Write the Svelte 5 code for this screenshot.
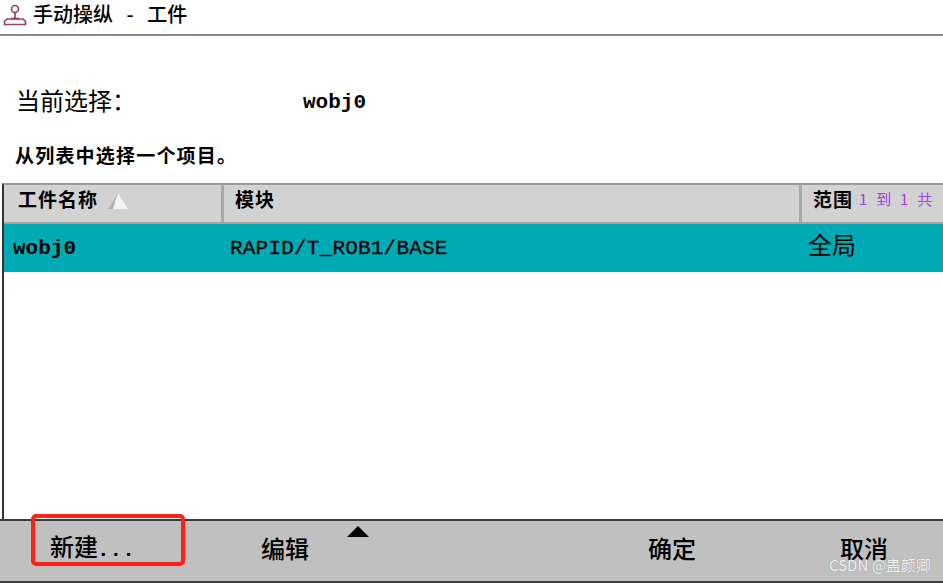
<script>
  const footerItems = [
    { label: '新建', dots: true, cls: 'new' },
    { label: '编辑', cls: 'edit' },
    { label: '确定', cls: 'ok' },
    { label: '取消', cls: 'cancel' }
  ];
</script>

<div class="screen">
  <header class="title-bar">
    <svg class="title-icon" width="24" height="22" viewBox="0 0 24 22" fill="none" stroke="#96406a" stroke-width="1.7">
      <circle cx="12" cy="5" r="3.5" />
      <path d="M12 8.5v6" />
      <path d="M8 14.500h8" />
      <path d="M4 15h16l2.500 2.500v3h-21v-3z" />
    </svg>
    <span class="title">手动操纵 - 工件</span>
  </header>

  <div class="current">
    <span class="current-label">当前选择：</span>
    <span class="current-value">wobj0</span>
  </div>

  <p class="hint">从列表中选择一个项目。</p>

  <section class="table">
    <div class="thead">
      <div class="th col-name">
        工件名称
        <svg class="sort" width="22" height="18" viewBox="0 0 22 18">
          <path d="M11 1L1 17h20z" fill="#f4f4f4" />
          <path d="M11 1L1 17h5z" fill="#b0b0b0" />
        </svg>
      </div>
      <div class="th col-module">模块</div>
      <div class="th col-scope">
        范围
        <span class="count">1 到 1 共</span>
      </div>
    </div>
    <div class="row selected">
      <div class="col-name cell mono bold">wobj0</div>
      <div class="col-module cell mono">RAPID/T_ROB1/BASE</div>
      <div class="col-scope cell scope">全局</div>
    </div>
  </section>

  <footer class="footer">
    {#each footerItems as item}
      <button class="foot-btn {item.cls}">{item.label}{#if item.dots}<span class="dots">...</span>{/if}</button>
    {/each}
    <span class="caret"></span>
    <span class="highlight"></span>
    <span class="watermark">CSDN @蛊颜卿</span>
  </footer>
</div>

<style>
  :global(body) { margin: 0; background: #fff; }

  .screen {
    width: 943px;
    height: 583px;
    display: flex;
    flex-direction: column;
    overflow: hidden;
    font-family: "Noto Sans CJK SC", "Liberation Sans", sans-serif;
    color: #000;
    background: #fff;
  }

  .title-bar {
    height: 36px;
    flex: none;
    display: flex;
    align-items: center;
    padding: 0 0 7px 3px;
    box-sizing: border-box;
    border-bottom: 2px solid #8a8a8a;
    gap: 6px;
  }
  .title-icon { flex: none; margin-top: 2px; }
  .title {
    font-size: 20px;
    font-weight: 500;
    word-spacing: 9px;
    line-height: 27px;
  }

  .current {
    display: flex;
    align-items: center;
    margin-top: 48px;
    padding-left: 16px;
    height: 32px;
    flex: none;
  }
  .current-label {
    width: 287px;
    flex: none;
    font-size: 24px;
    line-height: 32px;
  }
  .current-value, .mono {
    font-family: "Liberation Mono", "DejaVu Sans Mono", monospace;
  }
  .current-value { font-size: 21px; font-weight: 700; margin-top: 4px; }

  .hint {
    margin: 27px 0 0;
    padding-left: 15px;
    font-size: 19px;
    font-weight: 700;
    letter-spacing: 1.2px;
    line-height: 24px;
    flex: none;
  }

  .table {
    margin-top: 16px;
    flex: 1;
    border-top: 2px solid #9c9c9c;
    border-left: 2px solid #333;
    margin-left: 2px;
    display: flex;
    flex-direction: column;
    min-height: 0;
  }

  .thead {
    display: flex;
    height: 37px;
    flex: none;
    background: #d2d2d2;
    border-bottom: 2px solid #a4a4a4;
  }
  .th {
    display: flex;
    align-items: flex-start;
    height: 100%;
    box-sizing: border-box;
    padding-top: 1px;
    font-size: 19px;
    font-weight: 700;
    letter-spacing: 1px;
    line-height: 26px;
    border-right: 3px solid #a8a8a8;
  }
  .th:last-child { border-right: 0; }
  .col-name { width: 220px; flex: none; box-sizing: border-box; padding-left: 14px; }
  .col-module { width: 578px; flex: none; box-sizing: border-box; padding-left: 11px; }
  .col-scope { flex: 1; box-sizing: border-box; padding-left: 11px; }

  .sort { margin: 6px 0 0 9px; }
  .count {
    margin-left: 6px;
    font-size: 15px;
    font-weight: 400;
    letter-spacing: 0;
    color: #a040e0;
    word-spacing: 5.5px;
  }

  .row.selected {
    display: flex;
    align-items: center;
    height: 48px;
    flex: none;
    background: #00aab4;
  }
  .cell { white-space: nowrap; }
  .row .col-name { padding-left: 9px; font-size: 21px; }
  .row .col-module { padding-left: 6px; font-size: 21px; letter-spacing: 0.2px; -webkit-text-stroke: 0.3px #000; }
  .bold { font-weight: 700; }
  .scope { font-size: 24px; padding-left: 6px; margin-top: -10px; }

  .footer {
    position: relative;
    height: 64px;
    flex: none;
    display: flex;
    align-items: center;
    background: #c0c0c0;
    border-top: 2px solid #3c3c3c;
    border-bottom: 2px solid #3c3c3c;
    box-sizing: border-box;
  }
  .foot-btn {
    padding: 0;
    border: 0;
    background: none;
    font: inherit;
    font-size: 24px;
    font-weight: 500;
    line-height: 32px;
    color: #000;
    position: relative;
    top: -3px;
  }
  .new { margin-left: 50px; width: 211px; text-align: left; }
  .edit { width: 387px; text-align: left; }
  .ok { width: 192px; text-align: left; }
  .dots {
    margin-left: -1px;
    font-family: "Liberation Mono", monospace;
    font-size: 21px;
    font-weight: 700;
  }

  .caret {
    position: absolute;
    left: 347px;
    top: 5px;
    border-left: 11px solid transparent;
    border-right: 11px solid transparent;
    border-bottom: 11px solid #000;
  }
  .highlight {
    position: absolute;
    left: 31px;
    top: -7px;
    width: 154px;
    height: 52px;
    box-sizing: border-box;
    border: 4px solid #ff2116;
    border-radius: 5px;
  }
  .watermark {
    position: absolute;
    left: 829px;
    top: 35px;
    font-size: 15px;
    line-height: 18px;
    color: #fff;
    opacity: 0.8;
    text-shadow: 0 0 1px #777;
    white-space: nowrap;
  }
</style>
